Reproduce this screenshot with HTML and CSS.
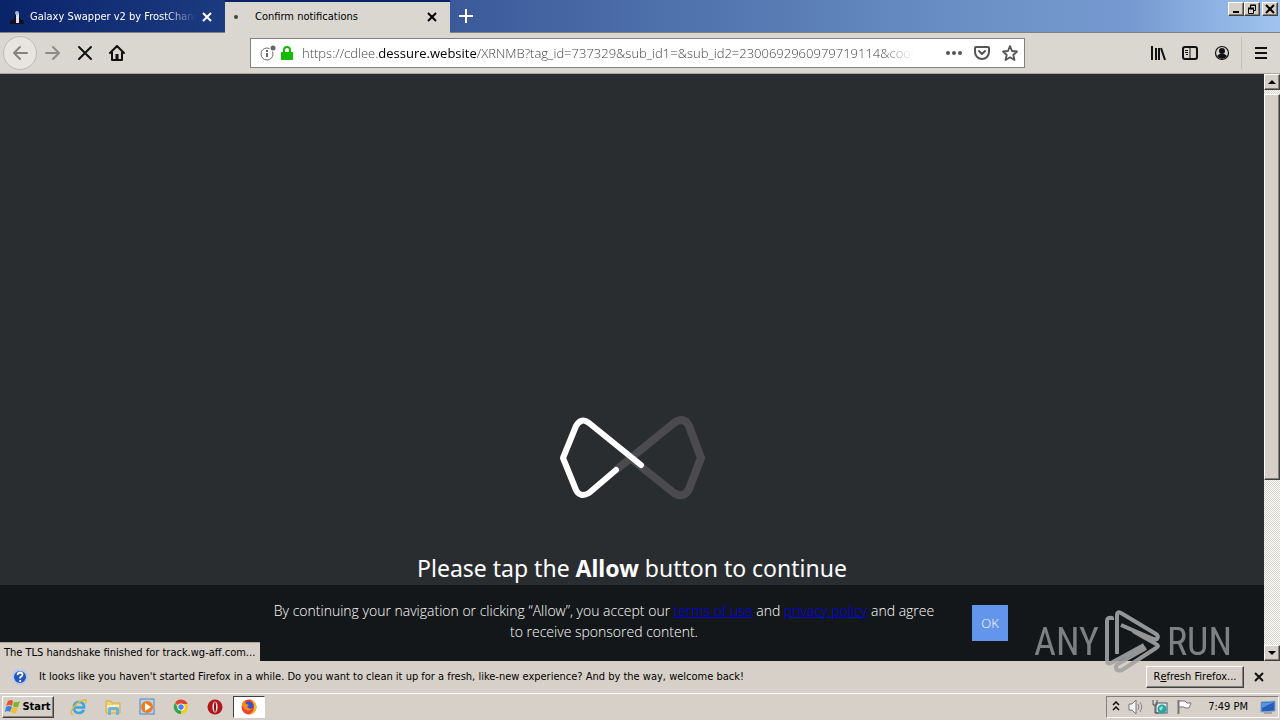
FILE: index.html
```html
<!DOCTYPE html>
<html lang="en">
<head>
  <meta charset="utf-8">
  <meta name="viewport" content="width=device-width, initial-scale=1">
  <title>Confirm notifications</title>
  <link rel="stylesheet" href="styles.css">
</head>
<body>

  <header class="tabs">
    <div class="tab">
      <svg class="favicon" width="16" height="16" viewBox="0 0 16 16"><path d="M1 15V12L5 10L6 6L8 2L10 6L11 10L15 12V15Z" fill="#10131c"/><path d="M7 4H10V14H7Z" fill="#e5dfe8"/><circle cx="8" cy="4" r="2" fill="#a9b4d8"/></svg>
      <span class="tab-title fade">Galaxy Swapper v2 by FrostChanger</span>
      <button class="tab-close" aria-label="Close tab"><svg width="12" height="12" viewBox="0 0 12 12"><path d="M2 2L10 10M10 2L2 10" stroke="currentColor" stroke-width="2"/></svg></button>
    </div>
    <div class="tab active">
      <span class="busy"></span>
      <span class="tab-title">Confirm notifications</span>
      <button class="tab-close" aria-label="Close tab"><svg width="12" height="12" viewBox="0 0 12 12"><path d="M2 2L10 10M10 2L2 10" stroke="currentColor" stroke-width="2"/></svg></button>
    </div>
    <button class="new-tab" aria-label="New tab"><svg width="14" height="14" viewBox="0 0 14 14"><path d="M7 0V14M0 7H14" stroke="#fff" stroke-width="2"/></svg></button>
    <div class="win-controls">
      <button class="bevel" aria-label="Minimize"><svg width="10" height="10" viewBox="0 0 10 10"><path d="M2 8H8" stroke="#000" stroke-width="2"/></svg></button>
      <button class="bevel" aria-label="Restore"><svg width="10" height="10" viewBox="0 0 10 10"><path d="M3.500 4V1.500H8.500V6.500H7M3 1H9M1.500 4.500H6.500V9.500H1.500ZM1 4H7" fill="none" stroke="#000"/><path d="M3 1.500H9M1 5H7" stroke="#000"/></svg></button>
      <button class="bevel close" aria-label="Close"><svg width="10" height="10" viewBox="0 0 10 10"><path d="M1 1L9 9M9 1L1 9" stroke="#000" stroke-width="2"/></svg></button>
    </div>
  </header>

  <nav class="toolbar">
    <div class="nav-buttons">
      <button class="back" aria-label="Back"><svg width="16" height="16" viewBox="0 0 16 16"><path d="M15 8H2M8 2L2 8L8 14" fill="none" stroke="#85837f" stroke-width="2" stroke-linecap="round" stroke-linejoin="round"/></svg></button>
      <button aria-label="Forward"><svg width="16" height="16" viewBox="0 0 16 16"><path d="M1 8H14M8 2L14 8L8 14" fill="none" stroke="#8d8b86" stroke-width="2" stroke-linecap="round" stroke-linejoin="round"/></svg></button>
      <button aria-label="Stop"><svg width="16" height="16" viewBox="0 0 16 16"><path d="M2 2L14 14M14 2L2 14" stroke="#111" stroke-width="2" stroke-linecap="round"/></svg></button>
      <button aria-label="Home"><svg width="16" height="16" viewBox="0 0 16 16"><path d="M1 8L8 1L15 8M3 7V15H13V7" fill="none" stroke="#111" stroke-width="2" stroke-linecap="round" stroke-linejoin="round"/><path d="M6.500 14V9H9.500V14Z" fill="#111"/></svg></button>
    </div>
    <div class="urlbar">
      <svg width="16" height="16" viewBox="0 0 16 16"><circle cx="7" cy="9" r="6" fill="none" stroke="#6f6f6f"/><path d="M7 8V12M7 5V7" stroke="#666" stroke-width="2"/><circle cx="13" cy="3" r="3.500" fill="#fff"/><circle cx="13" cy="3" r="2.500" fill="#666"/></svg>
      <svg class="lock" width="14" height="16" viewBox="0 0 14 16"><path d="M4 8V5A3 3 0 0 1 10 5V8" fill="none" stroke="#12bc00" stroke-width="2"/><rect x="1" y="7" width="12" height="8" rx="1" fill="#12bc00"/></svg>
      <div class="url fade">https://cdlee.<b>dessure.website</b>/XRNMB?tag_id=737329&amp;sub_id1=&amp;sub_id2=2300692960979719114&amp;cookie_id=</div>
      <button aria-label="Page actions"><svg width="16" height="16" viewBox="0 0 16 16"><circle cx="2" cy="8" r="2" fill="#555"/><circle cx="8" cy="8" r="2" fill="#555"/><circle cx="14" cy="8" r="2" fill="#555"/></svg></button>
      <button aria-label="Save to Pocket"><svg width="16" height="16" viewBox="0 0 16 16"><path d="M2 2H14Q15 2 15 3V7A7 7 0 0 1 1 7V3Q1 2 2 2Z" fill="none" stroke="#555" stroke-width="2"/><path d="M5 6L8 9L11 6" fill="none" stroke="#555" stroke-width="2" stroke-linecap="round" stroke-linejoin="round"/></svg></button>
      <button aria-label="Bookmark"><svg width="16" height="16" viewBox="0 0 16 16"><path d="M8 1L10 6L15 6.500L11.300 10L12.500 15L8 12.300L3.500 15L4.700 10L1 6.500L6 6Z" fill="none" stroke="#555" stroke-width="1.800" stroke-linejoin="round"/></svg></button>
    </div>
    <div class="tools">
      <button aria-label="Library"><svg width="16" height="16" viewBox="0 0 16 16"><path d="M2 1V15M6 3V15M9 3V15M11 3L15 15" stroke="#111" stroke-width="2"/></svg></button>
      <button aria-label="Sidebars"><svg width="16" height="16" viewBox="0 0 16 16"><rect x="1" y="2" width="14" height="12" rx="2" fill="none" stroke="#111" stroke-width="2"/><path d="M8 2V14" stroke="#111"/><path d="M3 5.500H6M3 7.500H6M4 9.500H6" stroke="#111"/></svg></button>
      <button aria-label="Account"><svg width="16" height="16" viewBox="0 0 16 16"><circle cx="8" cy="8" r="6.500" fill="none" stroke="#111" stroke-width="1.200"/><circle cx="8" cy="6" r="3" fill="#111"/><path d="M3 11Q5 9 6 9H10Q11 9 13 11Q11 14 8 14Q5 14 3 11Z" fill="#111"/></svg></button>
      <button class="menu" aria-label="Menu"><svg width="12" height="12" viewBox="0 0 12 12"><path d="M0 1H12M0 6H12M0 11H12" stroke="#111" stroke-width="2"/></svg></button>
    </div>
  </nav>

  <div class="browser">
    <main class="page">
      <div class="loader">
        <svg width="146" height="86" viewBox="0 0 146 86">
          <path d="M57 55L115 8Q125 1 130 11L142 43L130 74Q125 84 115 78L70 42" fill="none" stroke="#4b4b4f" stroke-width="8" stroke-linejoin="round"/>
          <path d="M82 50L30 8Q22 2 17 11L4 43L17 75Q21 83 30 78L57 55" fill="none" stroke="#fff" stroke-width="6" stroke-linecap="round" stroke-linejoin="round"/>
        </svg>
        <h1>Please tap the <b>Allow</b> button to continue</h1>
      </div>
      <div class="consent">
        <p>By continuing your navigation or clicking “Allow”, you accept our <a href="#">terms of use</a> and <a href="#">privacy policy</a> and agree to receive sponsored content.</p>
        <button>OK</button>
      </div>
      <div class="status">The TLS handshake finished for track.wg-aff.com...</div>
    </main>
    <div class="scrollbar">
      <button class="bevel" aria-label="Scroll up"><svg width="8" height="4" viewBox="0 0 8 4"><path d="M0 4L4 0L8 4Z"/></svg></button>
      <div class="track"><div class="thumb bevel"></div></div>
      <button class="bevel" aria-label="Scroll down"><svg width="8" height="4" viewBox="0 0 8 4"><path d="M0 0L4 4L8 0Z"/></svg></button>
    </div>
    <div class="watermark">
      <span>ANY</span>
      <svg width="56" height="64" viewBox="0 0 56 64"><path d="M7 10V8Q2 7 2 11V50Q2 55 6 53L39 35M12 44V5Q12 1 16 3L51 24Q54 26 52 29Q50 30 46 28L16 15M28 21L51 34Q55 36 51 38L17 60Q11 62 11 57Q11 55 13 54L41 38" fill="none" stroke="#a2a3a4" stroke-width="4" stroke-linejoin="round"/></svg>
      <span>RUN</span>
    </div>
  </div>

  <div class="notice">
    <svg width="16" height="16" viewBox="0 0 16 16"><circle cx="8" cy="8" r="7" fill="#2455bd" stroke="#b9c9ec" stroke-width="2"/><path d="M5.500 6Q6 3.500 8.200 3.500Q10.500 3.800 10.500 5.800Q10.500 7 8.200 8.300V9.500M8.200 11V13" fill="none" stroke="#fff" stroke-width="1.800"/></svg>
    <span>It looks like you haven't started Firefox in a while. Do you want to clean it up for a fresh, like-new experience? And by the way, welcome back!</span>
    <button class="refresh bevel">R<u>e</u>fresh Firefox...</button>
    <button class="notice-close" aria-label="Dismiss"><svg width="10" height="10" viewBox="0 0 10 10"><path d="M1 1L9 9M9 1L1 9" stroke="#111" stroke-width="2"/></svg></button>
  </div>

  <footer class="taskbar">
    <button class="start bevel">
      <svg width="16" height="16" viewBox="0 0 16 16"><path d="M3 2Q6 0 8 2L7 7Q4 5 1 7Z" fill="#e4562b"/><path d="M9 3Q12 4 15 2L13 8Q10 9 8 7Z" fill="#76b82d"/><path d="M1 8Q4 6 7 8L5 13Q3 11 0 13Z" fill="#3a83d2"/><path d="M8 8Q10 10 13 9L11 14Q8 15 6 13Z" fill="#f3bd27"/></svg>Start</button>
    <div class="apps">
      <button aria-label="Internet Explorer"><svg width="18" height="18" viewBox="0 0 18 18"><path d="M14 12Q12 15 9 15Q4 15 4 9.500Q4 4 9 4Q14 4 14 9.500H5" fill="none" stroke="#3aa5df" stroke-width="2.600"/><path d="M3 16Q0 17 2 12Q6 4 14 2Q18 1 15 6" fill="none" stroke="#e5b83b" stroke-width="1.500"/></svg></button>
      <button aria-label="Explorer"><svg width="18" height="18" viewBox="0 0 18 18"><path d="M2 3H7L8 5H16V15H2Z" fill="#f2d276" stroke="#d5aa45"/><path d="M3 7H15V10H3Z" fill="#fdf1b8"/><path d="M4 17V11Q4 9 6 9H13Q15 9 15 11V17H12V12H7V17Z" fill="#68b5e4"/></svg></button>
      <button aria-label="Media Player"><svg width="18" height="18" viewBox="0 0 18 18"><rect x="2" y="1" width="14" height="15" fill="#b4d4ef" stroke="#5286bd"/><circle cx="9" cy="9" r="6" fill="#f07d17"/><path d="M7 5L13 9L7 13Z" fill="#fff"/></svg></button>
      <button aria-label="Chrome"><svg width="18" height="18" viewBox="0 0 18 18"><circle cx="9" cy="9" r="7" fill="#f7c928"/><path d="M9 9L3 5A7 7 0 0 1 15.500 6H9Z" fill="#df4333"/><path d="M9 9L9 16A7 7 0 0 1 3 5L6 10Z" fill="#36a553"/><circle cx="9" cy="9" r="3.600" fill="#fff"/><circle cx="9" cy="9" r="2.700" fill="#4684e8"/></svg></button>
      <button aria-label="Opera"><svg width="18" height="18" viewBox="0 0 18 18"><circle cx="9" cy="9" r="7.500" fill="#b5141c"/><ellipse cx="9" cy="9" rx="2.600" ry="5.500" fill="#e8e4e4"/><ellipse cx="9" cy="9" rx="1" ry="5" fill="#8f1016"/></svg></button>
      <button class="current" aria-label="Firefox"><svg width="18" height="18" viewBox="0 0 18 18"><circle cx="9" cy="9" r="7.500" fill="#f4402f"/><path d="M10 1Q17 4 16.500 10Q15 16 9 16.500Q14 14 14 9Q14 4 10 1Z" fill="#ffb81c"/><circle cx="9" cy="8" r="4.500" fill="#3156c8"/><path d="M2 5L4 3L6 6L9 7L7 9L10 11L13 10Q10 14 6 12Q2 10 2 5Z" fill="#ff8a16"/></svg></button>
    </div>
    <div class="tray">
      <svg width="8" height="12" viewBox="0 0 8 12"><path d="M1 4L4 1L7 4M1 9L4 6L7 9" fill="none" stroke="#111" stroke-width="1.500"/></svg>
      <svg width="16" height="16" viewBox="0 0 16 16"><path d="M1 5H4L8 1V15L4 11H1Z" fill="#f5f5f5" stroke="#777"/><path d="M10 5Q12 8 10 11M12 3Q15.500 8 12 13" fill="none" stroke="#888"/></svg>
      <svg width="16" height="16" viewBox="0 0 16 16"><rect x="4" y="4" width="11" height="10" fill="#e9f0f3" stroke="#456"/><path d="M1 1V6H5V1M3 6V14H7" fill="none" stroke="#555"/><circle cx="10" cy="10" r="4.500" fill="#2ba2a7"/><path d="M7 9L10 7L11 9L9 12Z" fill="#9de0bd"/></svg>
      <svg width="16" height="16" viewBox="0 0 16 16"><path d="M2.500 1V15" stroke="#777" stroke-width="2"/><path d="M3 2H9L11 4H15L13 9H9L8 8H3Z" fill="#fafafa" stroke="#777"/></svg>
      <time>7:49 PM</time>
      <svg width="16" height="16" viewBox="0 0 16 16"><path d="M1 3L15 2V12L1 13Z" fill="#285fb8" stroke="#84a9d6"/><path d="M2 4L14 3L2 9Z" fill="#5b96dc"/><path d="M4 14H12" stroke="#777"/></svg>
    </div>
  </footer>

</body>
</html>
```

FILE: styles.css
```css
* {
  box-sizing: border-box;
}

body {
  margin: 0;
  height: 100vh;
  display: flex;
  flex-direction: column;
  overflow: hidden;
  font: 11px/14px "DejaVu Sans Condensed", "DejaVu Sans", sans-serif;
  color: #000;
  background: #d6d0c8;
}

button {
  display: flex;
  align-items: center;
  justify-content: center;
  flex: none;
  margin: 0;
  padding: 0;
  border: 0;
  background: none;
  font: inherit;
  color: inherit;
}

svg {
  display: block;
  flex: none;
}

.bevel {
  background: #d6d0c8;
  border: 1px solid;
  border-color: #fff #404040 #404040 #fff;
  box-shadow: inset -1px -1px #858079;
}

.fade {
  -webkit-mask-image: linear-gradient(to left, transparent, #000 32px);
  mask-image: linear-gradient(to left, transparent, #000 32px);
}

/* tab strip */

.tabs {
  display: flex;
  flex: none;
  height: 33px;
  background: linear-gradient(to right, #0a246a, #1c3a80 17%, #3a5999 35%, #4e70ab 52%, #6d92c8 78%, #7599d0 88%, #a0c4ee);
  border-bottom: 1px solid #85827e;
}

.tab {
  display: flex;
  align-items: center;
  width: 225px;
  padding: 2px 12px 0 9px;
  color: #fff;
}

.tab.active {
  height: 33px;
  margin-bottom: -1px;
  padding: 0 12px 1px 9px;
  border-top: 2px solid #0a246a;
  background: #dad7d1;
  color: #000;
}

.favicon {
  margin-right: 5px;
}

.tab-title {
  flex: 1;
  min-width: 0;
  margin-right: 5px;
  overflow: hidden;
  white-space: nowrap;
}

.busy {
  width: 4px;
  height: 4px;
  margin-right: 17px;
  border-radius: 50%;
  background: #444;
}

.new-tab {
  width: 32px;
}

.win-controls {
  display: flex;
  margin: 2px 2px 0 auto;
}

.win-controls button {
  width: 16px;
  height: 14px;
}

.win-controls .close {
  margin-left: 2px;
}

/* navigation bar */

.toolbar {
  display: flex;
  align-items: center;
  flex: none;
  height: 41px;
  background: #dad7d1;
  border-bottom: 1px solid #aaa7a1;
}

.nav-buttons {
  display: flex;
  align-items: center;
  flex: 1;
  padding-left: 3px;
}

.nav-buttons button {
  width: 32px;
  height: 32px;
}

.nav-buttons .back {
  width: 34px;
  height: 34px;
  border: 1px solid #bdbab5;
  border-radius: 50%;
  background: #e8e5e1;
}

.urlbar {
  display: flex;
  align-items: center;
  flex: 0 1 775px;
  min-width: 0;
  height: 30px;
  margin-right: 8px;
  padding: 0 6px 0 9px;
  gap: 12px;
  background: #fff;
  border: 1px solid #85827e;
}

.lock {
  margin-left: -8px;
}

.url {
  flex: 1;
  min-width: 0;
  margin: 0 21px 0 -4px;
  overflow: hidden;
  white-space: nowrap;
  font: 300 13px/18px "Open Sans", sans-serif;
  color: #444;
}

.url b {
  font-weight: 400;
  color: #000;
}

.tools {
  display: flex;
  align-items: center;
  justify-content: flex-end;
  flex: 1;
  gap: 16px;
}

.menu {
  width: 39px;
  height: 32px;
  margin-left: -5px;
  border-left: 1px solid #c2bfb9;
}

/* page area */

.browser {
  position: relative;
  display: flex;
  flex: 1;
  min-height: 0;
}

.page {
  position: relative;
  display: flex;
  flex-direction: column;
  justify-content: flex-end;
  flex: 1;
  background: #2a2d30;
  color: #fff;
}

.loader {
  display: flex;
  flex-direction: column;
  align-items: center;
  gap: 50px;
}

h1 {
  margin: 0;
  font: 23px/34px "Noto Sans", sans-serif;
}

.consent {
  display: flex;
  align-items: center;
  justify-content: center;
  height: 76px;
  padding-left: 10px;
  gap: 30px;
  background: #141719;
  font: 300 14px/21px "Open Sans", sans-serif;
}

.consent p {
  width: 676px;
  margin: 0 0 5px;
  text-align: center;
}

.consent a {
  color: #0000ee;
  text-decoration: underline 1px;
}

.consent button {
  width: 36px;
  height: 36px;
  background: #6495ed;
  font: 300 13px "Open Sans", sans-serif;
}

.status {
  position: absolute;
  left: 0;
  bottom: 0;
  padding: 3px 5px 1px 4px;
  border-top: 1px solid #aaa59e;
  background: #d6d0c8;
  color: #000;
}

.scrollbar {
  display: flex;
  flex-direction: column;
  flex: none;
  width: 16px;
}

.scrollbar button {
  height: 16px;
}

.track {
  flex: 1;
  padding-top: 4px;
  background: repeating-conic-gradient(#fff 0 25%, #d6d0c8 0 50%) 0 0 / 2px 2px;
}

.thumb {
  height: 70%;
}

.watermark {
  position: absolute;
  right: 48px;
  bottom: -13px;
  display: flex;
  align-items: center;
  gap: 6px;
  font: 38px/40px "Roboto Condensed", sans-serif;
  color: #898b8c;
  opacity: 0.9;
}

/* notification bar */

.notice {
  display: flex;
  align-items: center;
  flex: none;
  height: 32px;
  padding: 0 16px 0 12px;
}

.notice span {
  flex: 1;
  padding-left: 11px;
  white-space: nowrap;
}

.refresh {
  width: 98px;
  height: 22px;
}

.notice-close {
  margin-left: 10px;
}

/* taskbar */

.taskbar {
  display: flex;
  align-items: center;
  flex: none;
  height: 27px;
  padding: 0 1px 0 2px;
  border-top: 1px solid #fff;
}

.start {
  width: 52px;
  height: 22px;
  gap: 1px;
  font-weight: bold;
}

.apps {
  display: flex;
  flex: 1;
  gap: 2px;
  margin-left: 9px;
}

.apps button {
  width: 32px;
  height: 22px;
}

.apps .current {
  background: #fff;
  border: 1px solid;
  border-color: #404040 #fff #fff #404040;
}

.tray {
  display: flex;
  align-items: center;
  height: 22px;
  padding: 0 2px 0 5px;
  gap: 8px;
  border: 1px solid;
  border-color: #858079 #fff #fff #858079;
}

.tray time {
  margin: 0 4px 0 8px;
}
```
